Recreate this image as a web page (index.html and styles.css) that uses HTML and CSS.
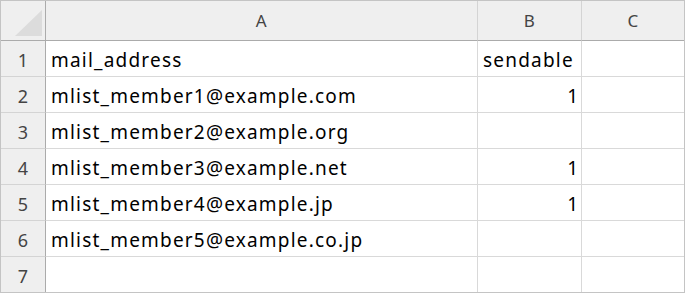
FILE: index.html
```html
<!DOCTYPE html>
<html lang="ja">
<head>
    <meta charset="UTF-8">
    <title>mlist</title>
    <link rel="stylesheet" href="styles.css">
</head>
<body>
    <div class="sheet">
        <div class="corner">
            <svg width="27" height="26" viewBox="0 0 27 26"><polygon points="27,0 27,26 0,26" fill="#dcdcdc"/></svg>
        </div>
        <div class="col-head">A</div>
        <div class="col-head">B</div>
        <div class="col-head last-col">C</div>

        <div class="row-head">1</div>
        <div class="cell">mail_address</div>
        <div class="cell">sendable</div>
        <div class="cell last-col"></div>

        <div class="row-head">2</div>
        <div class="cell">mlist_member1@example.com</div>
        <div class="cell num">1</div>
        <div class="cell last-col"></div>

        <div class="row-head">3</div>
        <div class="cell">mlist_member2@example.org</div>
        <div class="cell num"></div>
        <div class="cell last-col"></div>

        <div class="row-head">4</div>
        <div class="cell">mlist_member3@example.net</div>
        <div class="cell num">1</div>
        <div class="cell last-col"></div>

        <div class="row-head">5</div>
        <div class="cell">mlist_member4@example.jp</div>
        <div class="cell num">1</div>
        <div class="cell last-col"></div>

        <div class="row-head">6</div>
        <div class="cell">mlist_member5@example.co.jp</div>
        <div class="cell num"></div>
        <div class="cell last-col"></div>

        <div class="row-head last-row">7</div>
        <div class="cell last-row"></div>
        <div class="cell num last-row"></div>
        <div class="cell last-col last-row"></div>
    </div>
</body>
</html>
```

FILE: styles.css
```css
* {
    box-sizing: border-box;
}

body {
    margin: 0;
    background-color: white;
    font-family: "Noto Sans", "Noto Sans CJK JP", sans-serif;
}

.sheet {
    width: 685px;
    height: 293px;
    border: 1px solid #c4c4c4;
    display: grid;
    grid-template-columns: 45px 432px 104px 102px;
    grid-template-rows: 40px repeat(6, 36px) 35px;
}

.corner,
.col-head,
.row-head {
    background-color: #efefef;
    color: #444;
}

.corner {
    display: flex;
    justify-content: flex-end;
    align-items: flex-end;
    padding: 0 3px 4px 0;
    border-right: 1px solid #ababab;
    border-bottom: 1px solid #ababab;
}

.corner svg {
    display: block;
}

.col-head {
    display: flex;
    justify-content: center;
    align-items: center;
    font-size: 17px;
    letter-spacing: 0.5px;
    border-right: 1px solid #d4d4d4;
    border-bottom: 1px solid #ababab;
}

.row-head {
    display: flex;
    justify-content: center;
    align-items: center;
    padding-top: 2px;
    font-size: 18px;
    border-right: 1px solid #ababab;
    border-bottom: 1px solid #d4d4d4;
}

.cell {
    display: flex;
    align-items: center;
    padding: 2px 4px 0 5px;
    font-size: 19px;
    letter-spacing: 1.2px;
    color: #000;
    white-space: nowrap;
    border-right: 1px solid #d9d9d9;
    border-bottom: 1px solid #d9d9d9;
}

.cell.num {
    justify-content: flex-end;
    letter-spacing: 0;
    padding-right: 3px;
}

.last-col {
    border-right: none;
}

.last-row {
    border-bottom: none;
}
```
